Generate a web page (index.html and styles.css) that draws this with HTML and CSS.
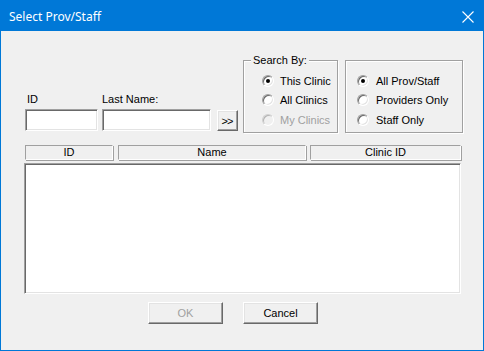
FILE: index.html
```html
<!DOCTYPE html>
<html>
<head>
<meta charset="utf-8">
<link rel="stylesheet" href="styles.css">
</head>
<body>
<div class="window">
  <div class="titlebar">
    <span class="title">Select Prov/Staff</span>
    <svg class="close" width="12" height="12" viewBox="0 0 12 12"><path d="M0.5 0.5 L11.5 11.5 M11.5 0.5 L0.5 11.5" stroke="#fff" stroke-width="1.1" fill="none"/></svg>
  </div>
  <div class="content">
    <div class="toprow">
      <div class="search">
        <div class="field f-id">
          <label class="lbl">ID</label>
          <div class="edit"></div>
        </div>
        <div class="field f-name">
          <label class="lbl">Last Name:</label>
          <div class="edit"></div>
        </div>
        <div class="btn go">&gt;&gt;</div>
      </div>
      <div class="group g1">
        <span class="legend">Search By:</span>
        <div class="radio"><span class="dot on"></span><span>This Clinic</span></div>
        <div class="radio"><span class="dot"></span><span>All Clinics</span></div>
        <div class="radio disabled"><span class="dot"></span><span>My Clinics</span></div>
      </div>
      <div class="group g2">
        <div class="radio"><span class="dot on"></span><span>All Prov/Staff</span></div>
        <div class="radio"><span class="dot"></span><span>Providers Only</span></div>
        <div class="radio"><span class="dot"></span><span>Staff Only</span></div>
      </div>
    </div>
    <div class="header">
      <div class="hcell c-id">ID</div>
      <div class="hcell c-name">Name</div>
      <div class="hcell c-clinic">Clinic ID</div>
    </div>
    <div class="list"></div>
    <div class="buttons">
      <div class="btn push disabled">OK</div>
      <div class="btn push">Cancel</div>
    </div>
  </div>
</div>
</body>
</html>
```
FILE: styles.css
```css
html, body {
  margin: 0;
  padding: 0;
  background: #f0f0f0;
}
.window {
  width: 484px;
  height: 351px;
  box-sizing: border-box;
  border: 1px solid #0078d7;
  background: #f0f0f0;
  font-family: "Liberation Sans", Arial, sans-serif;
  font-size: 11px;
  color: #000;
  overflow: hidden;
}
.titlebar {
  height: 30px;
  background: #0078d7;
  display: flex;
  align-items: center;
  justify-content: space-between;
  padding: 0 9px 0 8px;
}
.title {
  font-family: "Noto Sans", "Open Sans", sans-serif;
  font-size: 12px;
  color: #fff;
  padding-top: 1px;
}
.close {
  display: block;
  margin-top: 1px;
}
.content {
  padding: 29px 0 0 23px;
}
.toprow {
  display: flex;
  align-items: flex-end;
  height: 73px;
}
.search {
  display: flex;
  align-items: flex-end;
  margin-bottom: 2px;
}
.field {
  display: flex;
  flex-direction: column;
}
.lbl {
  line-height: 13px;
  margin-bottom: 3px;
}
.f-id { width: 73px; margin-left: 1px; }
.f-id .lbl { padding-left: 2px; }
.f-name { width: 109px; margin-left: 4px; }
.edit {
  height: 22px;
  box-sizing: border-box;
  background: #fff;
  border: 1px solid;
  border-color: #a0a0a0 #fff #fff #a0a0a0;
  box-shadow: inset 1px 1px 0 #696969, inset -1px -1px 0 #e3e3e3;
}
.btn {
  box-sizing: border-box;
  background: #f0f0f0;
  border: 1px solid;
  border-color: #fff #696969 #696969 #fff;
  box-shadow: inset -1px -1px 0 #a0a0a0, inset 1px 1px 0 #e3e3e3;
  display: flex;
  align-items: center;
  justify-content: center;
}
.go {
  width: 21px;
  height: 21px;
  margin-left: 6px;
  font-size: 11px;
  letter-spacing: -1px;
  padding-right: 1px;
}
.group {
  position: relative;
  height: 73px;
  box-sizing: border-box;
  border: 1px solid #a0a0a0;
  box-shadow: inset 1px 1px 0 #fff, 1px 1px 0 #fff;
  display: flex;
  flex-direction: column;
  padding-top: 10px;
}
.g1 {
  width: 95px;
  margin-left: 5px;
  padding-left: 18px;
}
.g2 {
  width: 118px;
  margin-left: 7px;
  padding-left: 11px;
}
.legend {
  position: absolute;
  top: -7px;
  left: 7px;
  background: #f0f0f0;
  padding: 0 2px;
  line-height: 13px;
}
.radio {
  display: flex;
  align-items: center;
  height: 19.5px;
}
.g1 .radio span:last-child { margin-left: 6px; }
.g2 .radio span:last-child { margin-left: 7px; }
.dot {
  width: 12px;
  height: 12px;
  box-sizing: border-box;
  border-radius: 50%;
  background: #fff;
  border: 1px solid;
  border-color: #a0a0a0 #fff #fff #a0a0a0;
  box-shadow: inset 1px 1px 0 #696969, inset -1px -1px 0 #e3e3e3;
  position: relative;
  flex: none;
}
.dot.on::after {
  content: "";
  position: absolute;
  left: 3px;
  top: 3px;
  width: 4px;
  height: 4px;
  border-radius: 50%;
  background: #000;
}
.radio.disabled { color: #a0a0a0; }
.radio.disabled .dot {
  background: #f0f0f0;
  border-color: #d0d0d0 #fff #fff #d0d0d0;
  box-shadow: inset 1px 1px 0 #b4b4b4, inset -1px -1px 0 #f0f0f0;
}
.header {
  display: flex;
  margin-top: 12px;
  margin-left: 1px;
  height: 15px;
}
.hcell {
  box-sizing: border-box;
  height: 15px;
  border: 1px solid;
  border-color: #a0a0a0 #fff #fff #a0a0a0;
  box-shadow: 1px 1px 0 #a0a0a0;
  text-align: center;
  line-height: 13px;
}
.c-id { width: 88px; }
.c-name { width: 188px; margin-left: 5px; }
.c-clinic { width: 151px; margin-left: 4px; }
.list {
  margin-top: 3px;
  width: 437px;
  height: 131px;
  box-sizing: border-box;
  background: #fff;
  border: 1px solid;
  border-color: #a0a0a0 #fff #fff #a0a0a0;
  box-shadow: inset 1px 1px 0 #696969, inset -1px -1px 0 #e3e3e3;
}
.buttons {
  display: flex;
  gap: 20px;
  margin-top: 8px;
  margin-left: 124px;
}
.push {
  width: 75px;
  height: 22px;
}
.push.disabled { color: #a0a0a0; }
```
